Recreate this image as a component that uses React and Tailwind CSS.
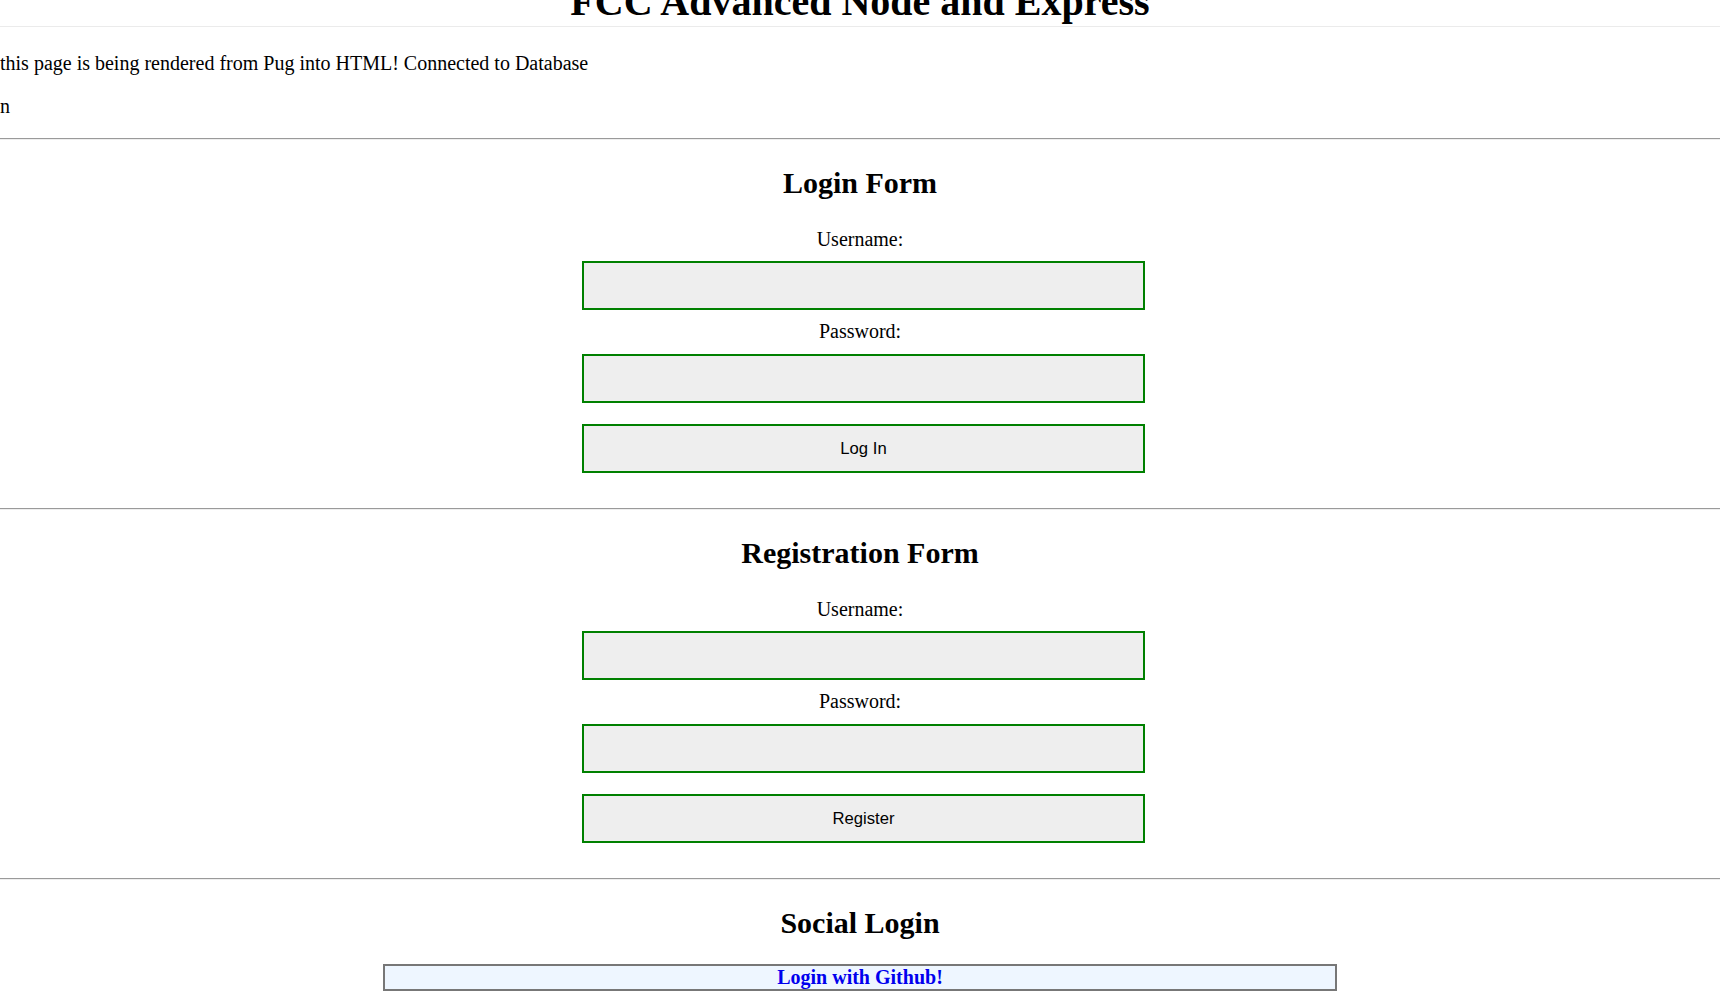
import React from "react";

function Rule() {
  return <div className="w-full h-[2px] border-t border-b border-t-[#9a9a9a] border-b-[#eeeeee]" />;
}

function Section({ title, button }) {
  return (
    <section className="flex flex-col items-center pb-[35px]">
      <Rule />
      <h2 className="mt-[25px] text-[30px] leading-[35px] font-bold">{title}</h2>
      <label className="mt-[28px] leading-[23px]">Username:</label>
      <input type="text" className="mt-[10px] ml-[7px] w-[563px] h-[49px] border-2 border-[#008000] bg-[#eeeeee] outline-none" />
      <label className="mt-[10px] leading-[23px]">Password:</label>
      <input type="password" className="mt-[11px] ml-[7px] w-[563px] h-[49px] border-2 border-[#008000] bg-[#eeeeee] outline-none" />
      <button className="mt-[21px] ml-[7px] w-[563px] h-[49px] border-2 border-[#008000] bg-[#eeeeee] font-['Liberation_Sans',Arial,sans-serif] text-[16.67px] text-black">
        {button}
      </button>
    </section>
  );
}

export default function App() {
  return (
    <div className="min-h-screen bg-white text-black font-['Liberation_Serif','Times_New_Roman',serif] text-[20px] leading-[23px] overflow-hidden">
      <header className="flex justify-center h-[27px] border-b border-[#ebebeb]">
        <h1 className="-mt-[21px] text-[40px] leading-[46px] font-bold whitespace-nowrap">FCC Advanced Node and Express</h1>
      </header>
      <p className="mt-[25px]">this page is being rendered from Pug into HTML! Connected to Database</p>
      <p className="mt-[20px]">n</p>
      <div className="mt-[20px]">
        <Section title="Login Form" button="Log In" />
        <Section title="Registration Form" button="Register" />
        <section className="flex flex-col items-center">
          <Rule />
          <h2 className="mt-[25px] text-[30px] leading-[35px] font-bold">Social Login</h2>
          <a className="mt-[24px] w-[954px] h-[27px] border-2 border-[#777777] bg-[#eef6ff] text-center font-bold text-[#0000ee] leading-[23px]">
            Login with Github!
          </a>
        </section>
      </div>
    </div>
  );
}
